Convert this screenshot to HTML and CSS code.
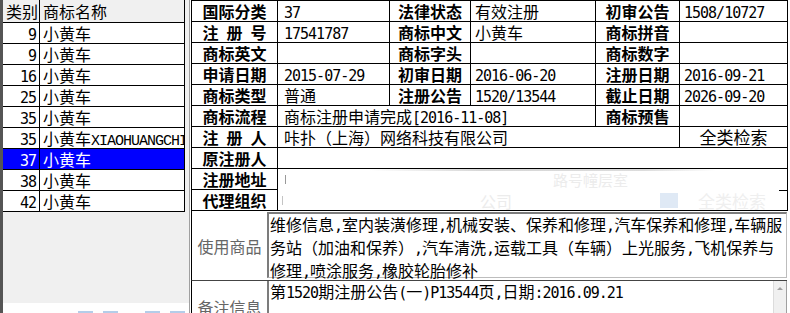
FILE: index.html
```html
<!DOCTYPE html>
<html lang="zh-CN">
<head>
  <meta charset="UTF-8">
  <title>商标详情</title>
  <link rel="stylesheet" href="styles.css">
</head>
<body>
  <div class="app">
    <div class="side">
      <div class="list">
        <div class="hd">类别</div>
        <div class="hd">商标名称</div>

        <div class="k"><span class="n">9</span></div>
        <div>小黄车</div>
        <div class="k"><span class="n">9</span></div>
        <div>小黄车</div>
        <div class="k"><span class="n">16</span></div>
        <div>小黄车</div>
        <div class="k"><span class="n">25</span></div>
        <div>小黄车</div>
        <div class="k"><span class="n">35</span></div>
        <div>小黄车</div>
        <div class="k"><span class="n">35</span></div>
        <div class="clip">小黄车<span class="e">XIAOHUANGCHI</span></div>
        <div class="k sel"><span class="n">37</span></div>
        <div class="sel">小黄车</div>
        <div class="k"><span class="n">38</span></div>
        <div>小黄车</div>
        <div class="k"><span class="n">42</span></div>
        <div>小黄车</div>
      </div>
      <div class="side-fill"></div>
      <div class="side-foot">
        <i class="tb b1"></i><i class="tb b2"></i><i class="tb b3"></i><i class="tb b2"></i>
      </div>
    </div>

    <div class="main">
      <div class="info">
        <div class="lb"><span>国际分类</span></div>
        <div class="v1"><span class="n">37</span></div>
        <div class="lb"><span>法律状态</span></div>
        <div>有效注册</div>
        <div class="lb"><span>初审公告</span></div>
        <div><span class="n">1508/10727</span></div>

        <div class="lb"><span>注 册 号</span></div>
        <div class="v1"><span class="n">17541787</span></div>
        <div class="lb"><span>商标中文</span></div>
        <div>小黄车</div>
        <div class="lb"><span>商标拼音</span></div>
        <div></div>

        <div class="lb"><span>商标英文</span></div>
        <div class="v1"></div>
        <div class="lb"><span>商标字头</span></div>
        <div></div>
        <div class="lb"><span>商标数字</span></div>
        <div></div>

        <div class="lb"><span>申请日期</span></div>
        <div class="v1"><span class="n">2015-07-29</span></div>
        <div class="lb"><span>初审日期</span></div>
        <div><span class="n">2016-06-20</span></div>
        <div class="lb"><span>注册日期</span></div>
        <div><span class="n">2016-09-21</span></div>

        <div class="lb"><span>商标类型</span></div>
        <div class="v1">普通</div>
        <div class="lb"><span>注册公告</span></div>
        <div><span class="n">1520/13544</span></div>
        <div class="lb"><span>截止日期</span></div>
        <div><span class="n">2026-09-20</span></div>

        <div class="lb"><span>商标流程</span></div>
        <div class="v1 span3">商标注册申请完成<span class="n">[2016-11-08]</span></div>
        <div class="lb"><span>商标预售</span></div>
        <div></div>

        <div class="lb"><span>注 册 人</span></div>
        <div class="v1 span4">咔扑（上海）网络科技有限公司</div>
        <div class="search">全类检索</div>

        <div class="lb"><span>原注册人</span></div>
        <div class="span5"></div>

        <div class="lb"><span>注册地址</span></div>
        <div class="ghost">
          <div class="ghost-a">
            <i class="tick"></i>
            <span class="faint fa">路号幢层室</span>
          </div>
          <div class="ghost-b">
            <i class="tick pale"></i>
            <span class="faint fb">公司</span>
            <i class="glow"></i>
            <span class="faint fc">全类检索</span>
            <i class="edge"></i>
          </div>
        </div>
        <div class="lb"><span>代理组织</span></div>
      </div>

      <div class="goods">
        <div class="glabel">使用商品</div>
        <div class="gbox">
          维修信息<span class="n">,</span>室内装潢修理<span class="n">,</span>机械安装、保养和修理<span class="n">,</span>汽车保养和修理<span class="n">,</span>车辆服<br>
          务站（加油和保养）<span class="n">,</span>汽车清洗<span class="n">,</span>运载工具（车辆）上光服务<span class="n">,</span>飞机保养与<br>
          修理<span class="n">,</span>喷涂服务<span class="n">,</span>橡胶轮胎修补
        </div>
      </div>

      <div class="memo">
        <div class="glabel mlabel">备注信息</div>
        <div class="mbox">
          <div class="mtext">第<span class="n">1520</span>期注册公告<span class="n">(</span>一<span class="n">)P13544</span>页<span class="n">,</span>日期<span class="n">:2016.09.21</span></div>
          <div class="scroll"><i class="up"></i></div>
        </div>
      </div>
    </div>
  </div>
</body>
</html>
```

FILE: styles.css
```css
* {
  box-sizing: border-box;
}

body {
  margin: 0;
  font-family: "Noto Sans CJK SC", sans-serif;
  font-size: 16px;
  color: #000;
  background: #fff;
  overflow: hidden;
}

.app {
  display: flex;
  width: 790px;
  height: 313px;
}

/* half-width runs, SimSun-like 8px cells */
.n {
  font-family: "DejaVu Sans Mono", monospace;
  font-size: 15px;
  letter-spacing: -1px;
}

.e {
  font-family: "Liberation Mono", monospace;
  font-size: 15px;
  letter-spacing: -1px;
}

/* left list */
.side {
  width: 189px;
  flex: none;
  display: flex;
  flex-direction: column;
  border-left: 3px solid #555;
  background: #f0f0f0;
}

.list {
  display: grid;
  grid-template-columns: 37px 145px;
  grid-template-rows: 23px;
  grid-auto-rows: 21px;
  width: 182px;
  background: #fff;
}

.list > div {
  border-right: 1px solid #000;
  border-bottom: 1px solid #000;
  line-height: 20px;
  padding-left: 3px;
  white-space: nowrap;
}

.list .clip {
  overflow: hidden;
}

.list .hd {
  background: #f0f0f0;
  line-height: 22px;
}

.list .k {
  text-align: right;
  padding: 0 3px 0 0;
}

.list .sel {
  background: #0000ff;
  color: #fff;
}

.side-fill {
  flex: 1;
}

.side-foot {
  height: 10px;
  background: #fff;
  display: flex;
  align-items: flex-end;
}

.tb {
  width: 15px;
  height: 2px;
  background: #b4cde9;
}

.b1 { margin-left: 75px; }
.b2 { margin-left: 10px; }
.b3 { margin-left: 27px; }

/* right panel */
.main {
  width: 601px;
  flex: none;
  border-left: 1px solid #a0a0a0;
  padding-left: 1px;
}

.info {
  display: grid;
  grid-template-columns: 86px 112px 81px 125px 84px 108px;
  grid-auto-rows: 21px;
  width: 597px;
  border-top: 1px solid #000;
  border-left: 1px solid #000;
}

.info > div {
  border-right: 1px solid #000;
  border-bottom: 1px solid #000;
  line-height: 20px;
  padding-left: 4px;
  white-space: nowrap;
}

.info .v1 {
  padding-left: 6px;
}

.info .lb {
  padding: 0;
  text-align: center;
  font-weight: bold;
}

.lb span {
  display: inline-block;
  width: 64px;
  text-align: justify;
  text-align-last: justify;
}

.span3 { grid-column: span 3; }
.span4 { grid-column: span 4; }
.span5 { grid-column: span 5; }

.info .search {
  padding: 0;
  text-align: center;
  font-size: 17px;
}

.info .ghost {
  grid-column: span 5;
  grid-row: span 2;
  padding: 0;
}

.ghost-a,
.ghost-b {
  height: 21px;
  display: flex;
  align-items: center;
}

.ghost-a {
  background: linear-gradient(to right, transparent 18%, #d6d6d6 40%, #dcdcdc 72%, transparent 86%) top / 100% 2px no-repeat;
}

.tick {
  width: 1px;
  height: 9px;
  margin-left: 7px;
  background: #999;
}

.tick.pale {
  margin-left: 4px;
  background: #c4c4c4;
}

.faint {
  color: #ececec;
}

.fa { margin-left: 267px; font-size: 15px; }
.fb { margin-left: 197px; }
.fc { margin-left: 20px; font-size: 17px; color: #efefef; }

.glow {
  width: 20px;
  height: 15px;
  margin-left: 148px;
  background: #dfe9f5;
}

.edge {
  align-self: flex-start;
  width: 9px;
  height: 1px;
  margin-left: 13px;
  background: #000;
}

/* goods and memo */
.goods,
.memo {
  display: flex;
  width: 596px;
  border-left: 1px solid #000;
}

.goods {
  height: 70px;
  border-bottom: 1px solid #444;
}

.glabel {
  width: 75px;
  flex: none;
  display: flex;
  align-items: center;
  justify-content: center;
  color: #666;
}

.gbox {
  flex: 1;
  margin: 1px 0 2px;
  border-top: 2px solid #7c7c7c;
  border-left: 2px solid #7c7c7c;
  border-right: 1px solid #bdbdbd;
  border-bottom: 1px solid #bdbdbd;
  padding: 0 0 0 1px;
  line-height: 21px;
  white-space: nowrap;
}

.memo {
  height: 60px;
}

.mlabel {
  align-items: flex-start;
  padding-top: 14px;
}

.mbox {
  flex: 1;
  display: flex;
  border-left: 2px solid #7c7c7c;
}

.mtext {
  flex: 1;
  padding: 0 0 0 1px;
  line-height: 20px;
  white-space: nowrap;
}

.scroll {
  width: 14px;
  flex: none;
  background: #f0f0f0;
  border-left: 1px solid #dcdcdc;
  border-right: 1px solid #a0a0a0;
  display: flex;
  justify-content: center;
  padding-top: 6px;
}

.up {
  width: 0;
  height: 0;
  border-left: 3px solid transparent;
  border-right: 3px solid transparent;
  border-bottom: 3px solid #a0a0a0;
}
```
